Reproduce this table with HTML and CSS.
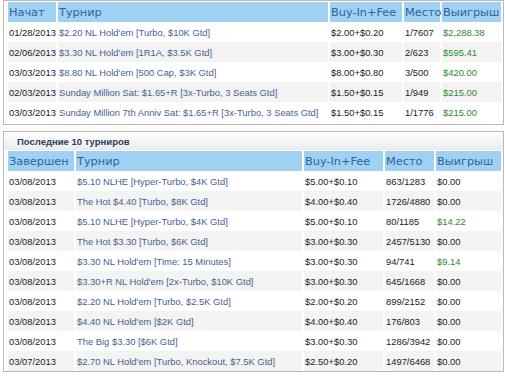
FILE: index.html
```html
<!DOCTYPE html>
<html>
<head>
<meta charset="utf-8">
<link rel="stylesheet" href="styles.css">
</head>
<body>
<div class="page">
  <div class="box box-top">
    <table class="grid grid-top">
      <colgroup>
        <col class="c1"><col class="c2"><col class="c3"><col class="c4"><col class="c5">
      </colgroup>
      <thead>
        <tr><th>Начат</th><th>Турнир</th><th>Buy-In+Fee</th><th>Место</th><th>Выигрыш</th></tr>
      </thead>
      <tbody>
        <tr><td class="date">01/28/2013</td><td class="name">$2.20 NL Hold'em [Turbo, $10K Gtd]</td><td>$2.00+$0.20</td><td>1/7607</td><td class="win">$2,288.38</td></tr>
        <tr><td class="date">02/06/2013</td><td class="name">$3.30 NL Hold'em [1R1A, $3.5K Gtd]</td><td>$3.00+$0.30</td><td>2/623</td><td class="win">$595.41</td></tr>
        <tr><td class="date">03/03/2013</td><td class="name">$8.80 NL Hold'em [500 Cap, $3K Gtd]</td><td>$8.00+$0.80</td><td>3/500</td><td class="win">$420.00</td></tr>
        <tr><td class="date">02/03/2013</td><td class="name">Sunday Million Sat: $1.65+R [3x-Turbo, 3 Seats Gtd]</td><td>$1.50+$0.15</td><td>1/949</td><td class="win">$215.00</td></tr>
        <tr><td class="date">03/03/2013</td><td class="name">Sunday Million 7th Anniv Sat: $1.65+R [3x-Turbo, 3 Seats Gtd]</td><td>$1.50+$0.15</td><td>1/1776</td><td class="win">$215.00</td></tr>
      </tbody>
    </table>
  </div>

  <div class="box box-last">
    <div class="box-title">Последние 10 турниров</div>
    <table class="grid grid-last">
      <colgroup>
        <col class="d1"><col class="d2"><col class="d3"><col class="d4"><col class="d5">
      </colgroup>
      <thead>
        <tr><th>Завершен</th><th>Турнир</th><th>Buy-In+Fee</th><th>Место</th><th>Выигрыш</th></tr>
      </thead>
      <tbody>
        <tr><td class="date">03/08/2013</td><td class="name">$5.10 NLHE [Hyper-Turbo, $4K Gtd]</td><td>$5.00+$0.10</td><td>863/1283</td><td>$0.00</td></tr>
        <tr><td class="date">03/08/2013</td><td class="name">The Hot $4.40 [Turbo, $8K Gtd]</td><td>$4.00+$0.40</td><td>1726/4880</td><td>$0.00</td></tr>
        <tr><td class="date">03/08/2013</td><td class="name">$5.10 NLHE [Hyper-Turbo, $4K Gtd]</td><td>$5.00+$0.10</td><td>80/1185</td><td class="win">$14.22</td></tr>
        <tr><td class="date">03/08/2013</td><td class="name">The Hot $3.30 [Turbo, $6K Gtd]</td><td>$3.00+$0.30</td><td>2457/5130</td><td>$0.00</td></tr>
        <tr><td class="date">03/08/2013</td><td class="name">$3.30 NL Hold'em [Time: 15 Minutes]</td><td>$3.00+$0.30</td><td>94/741</td><td class="win">$9.14</td></tr>
        <tr><td class="date">03/08/2013</td><td class="name">$3.30+R NL Hold'em [2x-Turbo, $10K Gtd]</td><td>$3.00+$0.30</td><td>645/1668</td><td>$0.00</td></tr>
        <tr><td class="date">03/08/2013</td><td class="name">$2.20 NL Hold'em [Turbo, $2.5K Gtd]</td><td>$2.00+$0.20</td><td>899/2152</td><td>$0.00</td></tr>
        <tr><td class="date">03/08/2013</td><td class="name">$4.40 NL Hold'em [$2K Gtd]</td><td>$4.00+$0.40</td><td>176/803</td><td>$0.00</td></tr>
        <tr><td class="date">03/08/2013</td><td class="name">The Big $3.30 [$6K Gtd]</td><td>$3.00+$0.30</td><td>1286/3942</td><td>$0.00</td></tr>
        <tr><td class="date">03/07/2013</td><td class="name">$2.70 NL Hold'em [Turbo, Knockout, $7.5K Gtd]</td><td>$2.50+$0.20</td><td>1497/6468</td><td>$0.00</td></tr>
      </tbody>
    </table>
  </div>
</div>
</body>
</html>
```

FILE: styles.css
```css
html, body {
  margin: 0;
  padding: 0;
  background: #ffffff;
}

.page {
  width: 501px;
  margin-left: 3px;
  display: flex;
  flex-direction: column;
  gap: 6px;
  font-family: "Liberation Sans", Arial, sans-serif;
}

.box {
  border: 1px solid #b9b9b9;
  background: #ffffff;
}

.box-top {
  padding: 1px 1px 2px 2px;
}

.box-last {
  padding: 0 1px 0 2px;
}

.box-title {
  height: 18px;
  line-height: 19px;
  margin-left: -2px;
  margin-right: -1px;
  padding-left: 13px;
  font-size: 9.5px;
  font-weight: bold;
  color: #2c3e55;
  background: linear-gradient(#ffffff, #e9ebed);
  border-bottom: 1px solid #ffffff;
}

.grid {
  border-collapse: separate;
  border-spacing: 2px 0;
  table-layout: fixed;
  width: 497px;
}

.c1 { width: 48px; }
.c2 { width: 270px; }
.c3 { width: 72px; }
.c4 { width: 36px; }
.c5 { width: 59px; }

.d1 { width: 66px; }
.d2 { width: 226px; }
.d3 { width: 79px; }
.d4 { width: 49px; }
.d5 { width: 65px; }

.grid th {
  height: 20px;
  padding: 0 0 0 1px;
  background: #9fd1f2;
  color: #2f62a0;
  font-family: "DejaVu Sans", Verdana, sans-serif;
  font-size: 11.3px;
  font-weight: normal;
  text-align: left;
  white-space: nowrap;
}

.grid td {
  height: 20px;
  padding: 0 0 0 1px;
  font-size: 9.4px;
  color: #1a1a1a;
  white-space: nowrap;
  overflow: hidden;
}

.grid tbody tr:nth-child(even) td {
  background: #f3f3f3;
}

.grid td.name {
  color: #45628f;
}

.grid td.win {
  color: #2c8a2c;
}
```
